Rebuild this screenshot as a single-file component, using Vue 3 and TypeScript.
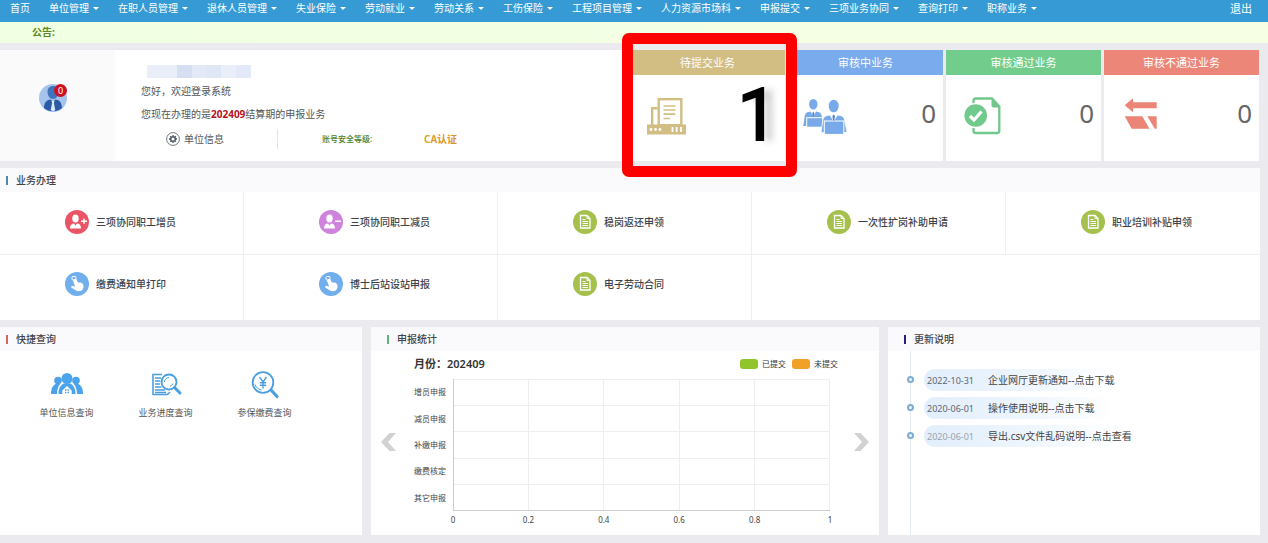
<script setup lang="ts">
interface Stat { label: string; value: string; tone: string; icon: string; marked?: boolean }
interface Service { label: string; icon: string; tone: string }

const menus: string[] = [
  '单位管理', '在职人员管理', '退休人员管理', '失业保险', '劳动就业', '劳动关系', '工伤保险',
  '工程项目管理', '人力资源市场科', '申报提交', '三项业务协同', '查询打印', '职称业务',
]

const stats: Stat[] = [
  { label: '待提交业务', value: '1', tone: 'sand', icon: 'pending', marked: true },
  { label: '审核中业务', value: '0', tone: 'blue', icon: 'review' },
  { label: '审核通过业务', value: '0', tone: 'green', icon: 'passed' },
  { label: '审核不通过业务', value: '0', tone: 'red', icon: 'failed' },
]

const services: Service[] = [
  { label: '三项协同职工增员', icon: 'plus', tone: 'rose' },
  { label: '三项协同职工减员', icon: 'minus', tone: 'violet' },
  { label: '稳岗返还申领', icon: 'doc', tone: 'lime' },
  { label: '一次性扩岗补助申请', icon: 'doc', tone: 'lime' },
  { label: '职业培训补贴申领', icon: 'doc', tone: 'lime' },
  { label: '缴费通知单打印', icon: 'hand', tone: 'sky' },
  { label: '博士后站设站申报', icon: 'hand', tone: 'sky' },
  { label: '电子劳动合同', icon: 'doc', tone: 'lime' },
]

const queries = [
  { label: '单位信息查询', icon: 'people' },
  { label: '业务进度查询', icon: 'progress' },
  { label: '参保缴费查询', icon: 'fee' },
]

const categories: string[] = ['增员申报', '减员申报', '补缴申报', '缴费核定', '其它申报']
const ticks: string[] = ['0', '0.2', '0.4', '0.6', '0.8', '1']

const updates = [
  { date: '2022-10-31', text: '企业网厅更新通知--点击下载', muted: false },
  { date: '2020-06-01', text: '操作使用说明--点击下载', muted: false },
  { date: '2020-06-01', text: '导出.csv文件乱码说明--点击查看', muted: true },
]
</script>

<template>
  <div class="page">
    <nav class="nav">
      <a class="nav-item" href="#">首页</a>
      <button v-for="m in menus" :key="m" class="nav-item" type="button">{{ m }}<i class="caret"></i></button>
      <a class="nav-item logout" href="#">退出</a>
    </nav>
    <div class="notice">公告:</div>

    <main class="main">
      <section class="top">
        <div class="welcome">
          <div class="avatar-col">
            <div class="avatar">
              <svg viewBox="0 0 28 28" width="28" height="28">
                <circle cx="14" cy="14" r="14" fill="#a5c3ec" />
                <path d="M14 2c3.600 0 5.500 2.500 5.500 6s-2.300 7-5.500 7-5.500-3.500-5.500-7 1.900-6 5.500-6z" fill="#3f74bb" />
                <path d="M5 24c0-5 2.500-8 6.500-8.500L14 18l2.500-2.500C20.500 16 23 19 23 24a14 14 0 0 1-18 0z" fill="#2c5ba6" />
                <path d="M12.500 17h3l-.6 2 1.400 7-2.300 1.500L11.700 26l1.400-7z" fill="#dbe8fa" />
              </svg>
              <span class="badge">0</span>
            </div>
          </div>
          <div class="greeting">
            <div class="masked"><i></i><i></i><i></i><i></i><i></i><i></i><i></i></div>
            <p>您好，欢迎登录系统</p>
            <p>您现在办理的是<b>202409</b>结算期的申报业务</p>
            <div class="account">
              <a class="unit" href="#">
                <svg viewBox="0 0 14 14" width="14" height="14" fill="none" stroke="#4a5560">
                  <circle cx="7" cy="7" r="6.400" stroke-width=".8" />
                  <circle cx="7" cy="7" r="2.300" stroke-width="1.500" />
                  <path d="M7 3v1M7 10v1M3 7h1M10 7h1M4.200 4.200l.7.7M9.100 9.100l.7.7M4.200 9.800l.7-.7M9.100 4.900l.7-.7" stroke-width="1.300" />
                </svg>
                单位信息
              </a>
              <div class="level"><span>账号安全等级:</span><strong>CA认证</strong></div>
            </div>
          </div>
        </div>

        <a v-for="s in stats" :key="s.label" class="stat" :class="s.tone" href="#">
          <span class="stat-head">{{ s.label }}</span>
          <span class="stat-body">
            <svg v-if="s.icon === 'pending'" viewBox="0 0 44 38" width="44" height="38">
              <path d="M12.500 11.200H7.200V28" fill="none" stroke="#d2bd83" stroke-width="2.400" />
              <rect x="13.700" y="2.200" width="22.600" height="26" fill="#fff" stroke="#d2bd83" stroke-width="2.400" />
              <path d="M18.500 9h12M18.500 13h12M18.500 17.200h12M18.500 21.500h6.500" stroke="#d2bd83" stroke-width="1.700" />
              <rect x="2" y="27.500" width="39" height="10" fill="#d2bd83" />
              <path d="M27.500 30v5M31.700 30v5M36 30v5" stroke="#fff" stroke-width="1.800" />
              <circle cx="6" cy="32.500" r="1.400" fill="#fff" /><circle cx="10.500" cy="32.500" r="1.400" fill="#fff" /><circle cx="15" cy="32.500" r="1.400" fill="#fff" />
            </svg>
            <svg v-else-if="s.icon === 'review'" viewBox="0 0 44 38" width="44" height="38">
              <g fill="#78a9e8">
                <ellipse cx="10.300" cy="7.300" rx="4.200" ry="5.200" />
                <path d="M.3 29l1.500-10.500C2.200 16 4 15 7.500 14.500L10.300 19l2.800-4.500c3.500.5 5 1.500 5.600 4L20 29z" />
                <rect x="3.700" y="20.700" width="16" height="9.500" stroke="#fff" stroke-width="1" />
                <ellipse cx="30.700" cy="9" rx="5" ry="6.300" />
                <path d="M18 35.500l1.800-12.500c.5-3 2.700-4.500 7.200-5l3.700 6 3.700-6c4.500.5 6.700 2 7.200 5L44 35.500z" stroke="#fff" stroke-width=".8" />
                <rect x="21.300" y="24" width="19.500" height="13.400" stroke="#fff" stroke-width="1" />
              </g>
              <path d="M10.300 14.500l1 1.400-.6 4h-.8l-.6-4zM30.700 17.500l1.300 1.600-.7 4.600h-1.200l-.7-4.600z" fill="#4f86d2" />
            </svg>
            <svg v-else-if="s.icon === 'passed'" viewBox="0 0 44 38" width="44" height="38">
              <path d="M12.500 8V3.500a2 2 0 0 1 2-2H31l7.300 8V34a2 2 0 0 1-2 2H14.500a2 2 0 0 1-2-2v-5" fill="#fff" stroke="#72c78c" stroke-width="2.300" />
              <path d="M30.500.5L39.500 10.500h-7a2 2 0 0 1-2-2z" fill="#72c78c" />
              <circle cx="14.700" cy="18.500" r="12.600" fill="#fff" />
              <circle cx="14.700" cy="18.500" r="11.300" fill="#72c98c" />
              <path d="M9 19l4 4 7.500-8.500" fill="none" stroke="#fff" stroke-width="3.200" />
            </svg>
            <svg v-else viewBox="0 0 44 38" width="44" height="38" fill="#ea8578">
              <path d="M5.700 8.300L14 1.300v4h23.700v6H14v4zM5.700 19.300h17.600L30.500 31.700H12.700zM28.300 19.300h9.400v12.400h-2z" />
            </svg>
            <span class="stat-value" :class="{ handwritten: s.marked }">{{ s.value }}</span>
          </span>
          <span v-if="s.marked" class="marker"></span>
        </a>
      </section>

      <section class="panel">
        <h2 class="title teal">业务办理</h2>
        <div class="services">
          <a v-for="s in services" :key="s.label" class="service" href="#">
            <svg viewBox="0 0 24 24" width="24" height="24" :class="s.tone">
              <circle cx="12" cy="12" r="12" />
              <g v-if="s.icon === 'plus' || s.icon === 'minus'" fill="#fff">
                <ellipse cx="10.500" cy="8.500" rx="3.200" ry="4" />
                <path d="M5 18.500c0-3.500 1.500-4.800 4-5l1.500 2 1.500-2c2.500.2 4 1.500 4 5z" />
                <path v-if="s.icon === 'plus'" d="M18.300 8.500h1.400v2H22v1.400h-2.300v2h-1.400v-2H16v-1.400h2.300z" />
                <path v-else d="M16 10.500h6v1.400h-6z" />
              </g>
              <g v-else-if="s.icon === 'doc'" fill="none" stroke="#fff">
                <path d="M7.500 5.500h6.500l3 3v9.500H7.500z" stroke-width="1.300" />
                <path d="M14 5.500v3h3" stroke-width="1" />
                <path d="M9.500 9.500h3M9.500 11.500h5.500M9.500 13.500h5.500M9.500 15.500h5.500" stroke-width="1" />
              </g>
              <g v-else>
                <rect x="7" y="4.500" width="4" height="3.500" rx="1" fill="none" stroke="#fff" stroke-width="1" />
                <path d="M9.400 7.200c.9-.6 1.900-.1 2.300.8l1.200 2.600c2.400-.4 4.600.2 5.300 1.900.7 1.700.3 4.200-1 5.600-1.600 1.500-5 1.600-6.500.2L6.500 15.700c-.9-.9.200-2.300 1.400-1.800l2.200.8-2-5.800c-.2-.8.600-1.300 1.300-1.700z" fill="#fff" />
              </g>
            </svg>
            {{ s.label }}
          </a>
        </div>
      </section>

      <section class="bottom">
        <div class="panel">
          <h2 class="title red">快捷查询</h2>
          <div class="queries">
            <a v-for="q in queries" :key="q.label" class="query" href="#">
              <svg v-if="q.icon === 'people'" viewBox="0 0 34 28" width="34" height="28" fill="#4aa3ec">
                <circle cx="8" cy="9.500" r="3.800" /><circle cx="26" cy="9.500" r="3.800" />
                <path d="M1 23c0-6 2-9.500 6-10.500h3.500C8 15.500 7 19 7 23zM33 23c0-6-2-9.500-6-10.500h-3.500C26 15.500 27 19 27 23z" />
                <circle cx="17" cy="7.500" r="5.500" />
                <path d="M8.500 23c0-6 2.500-10 6-10.500h5c3.500.5 6 4.500 6 10.500h-3.800v-3.500L17 15l-4.700 4.500V23z" />
                <path d="M15 18.300h1.500v1.500H15zM17.500 18.300H19v1.500h-1.500zM15 20.700h1.500v1.500H15zM17.500 20.700H19v1.500h-1.500z" />
              </svg>
              <svg v-else-if="q.icon === 'progress'" viewBox="0 0 34 28" width="34" height="28" fill="none" stroke="#4a9fe0">
                <path d="M13 3.500H4v20h14.500l2.500-2.500" stroke-width="1.600" />
                <path d="M6 7h6M6 10h5M6 13h5M6 16h6.500M6 19h10M6 21.500h11" stroke-width="1.300" />
                <circle cx="20" cy="11" r="7.500" stroke-width="1.900" fill="#fff" />
                <path d="M15.500 11a4.500 4.500 0 0 1 4.500-4.500M24 12.500a4.500 4.500 0 0 1-3 2.800" stroke-width="1" />
                <path d="M25.500 16.500l5.500 5.500" stroke-width="3" stroke-linecap="round" />
              </svg>
              <svg v-else viewBox="0 0 34 28" width="34" height="28" fill="none" stroke="#4a9fe0">
                <circle cx="15" cy="11.500" r="10.300" stroke-width="1.800" />
                <path d="M11.500 6l3.500 5 3.500-5M15 11v6.500M11.800 11.700h6.400M11.800 14.300h6.400" stroke-width="1.400" />
                <path d="M7 13.500c1 3 3.500 5 6.500 5.500" stroke-width="1" />
                <path d="M23.500 19.500l5.500 6" stroke-width="3.200" stroke-linecap="round" />
              </svg>
              <span>{{ q.label }}</span>
            </a>
          </div>
        </div>

        <div class="panel">
          <h2 class="title green">申报统计</h2>
          <div class="carousel">
            <button class="arrow" type="button" aria-label="上一页">
              <svg viewBox="0 0 15 18" width="15" height="18"><path d="M8.500 0H15L7 9l8 9H8.500L0 9z" fill="#d2d2d2" /></svg>
            </button>
            <div class="chart">
              <div class="chart-head">
                <h3>月份：202409</h3>
                <span class="legend"><i class="done"></i>已提交</span>
                <span class="legend"><i class="todo"></i>未提交</span>
              </div>
              <div class="chart-body">
                <div class="y-axis"><span v-for="c in categories" :key="c">{{ c }}</span></div>
                <div class="plot"><i v-for="n in 25" :key="n"></i></div>
              </div>
              <div class="x-axis"><span v-for="t in ticks" :key="t">{{ t }}</span></div>
            </div>
            <button class="arrow" type="button" aria-label="下一页">
              <svg viewBox="0 0 15 18" width="15" height="18"><path d="M6.500 0H0l8 9-8 9h6.500L15 9z" fill="#d2d2d2" /></svg>
            </button>
          </div>
        </div>

        <div class="panel updates-panel">
          <h2 class="title navy">更新说明</h2>
          <ul class="updates">
            <li v-for="u in updates" :key="u.text">
              <i class="dot"></i>
              <a href="#" class="update"><time :class="{ muted: u.muted }">{{ u.date }}</time>{{ u.text }}</a>
            </li>
          </ul>
        </div>
      </section>
    </main>
  </div>
</template>

<style>
body { background: #ebebef; }
</style>

<style scoped>
.page {
  font-family: "Noto Sans", "Noto Sans CJK SC", sans-serif;
  font-size: 10px;
  line-height: 16px;
  color: #555;
  overflow: hidden;
}
.page *, .page *::before { box-sizing: border-box; }
a { color: inherit; text-decoration: none; }
button { font: inherit; color: inherit; background: none; border: 0; padding: 0; cursor: pointer; }
h2, h3, p, ul { margin: 0; padding: 0; }
svg { display: block; flex: none; }

.nav {
  display: flex;
  gap: 19px;
  padding: 0 16px 5px 10px;
  background: #369bd4;
  color: #fff;
  white-space: nowrap;
}
.nav-item { display: flex; align-items: center; gap: 4px; line-height: 17px; font-weight: 400; }
.caret { border: 3px solid transparent; border-top-color: #fff; border-bottom: 0; }
.logout { margin-left: auto; font-size: 11px; }
.notice {
  padding: 2px 32px 3px;
  background: linear-gradient(90deg, #f1ffe2, #f6ffe4);
  color: #5c8a1e;
  font-weight: 700;
}

.main { display: flex; flex-direction: column; gap: 7px; margin-left: -10px; padding: 7px 8px 9px 0; }

.top { display: flex; gap: 3px; margin-right: 1px; }
.welcome { display: flex; flex: 1; min-width: 0; background: #fff; margin-right: -1px; }
.avatar-col { display: flex; width: 125px; padding: 34px 0 0 49px; background: #fafafb; }
.avatar { position: relative; width: 28px; height: 28px; }
.badge {
  position: absolute;
  top: 0;
  right: 0;
  width: 13px;
  height: 13px;
  border-radius: 50%;
  background: #cb1020;
  color: #fff;
  font-size: 9px;
  line-height: 13px;
  text-align: center;
}
.greeting { flex: 1; padding: 15px 0 0 26px; white-space: nowrap; }
.masked { display: flex; width: 104px; height: 13px; margin: 0 0 5px 6px; }
.masked i { flex: 1; background: #e9eef9; }
.masked i:nth-child(3) { background: #d6dff1; }
.masked i:nth-child(4) { background: #e3e9f6; }
.masked i:nth-child(5) { background: #dfe7f6; }
.masked i:nth-child(7) { background: #e3e9f8; }
.greeting p { margin-bottom: 7px; }
.greeting b { color: #b5121b; }
.account { display: flex; align-items: center; height: 20px; }
.unit { display: flex; align-items: center; gap: 4px; width: 137px; height: 20px; padding-left: 25px; border-right: 1px solid #e4e4e4; }
.level { display: flex; align-items: center; padding-left: 44px; font-size: 8px; font-weight: 500; color: #4c7d24; }
.level span { width: 102px; }
.level strong { color: #de9622; font-size: 10px; font-weight: 600; }

.stat { position: relative; flex: 0 0 155px; background: #fff; }
.stat-head { display: block; height: 25px; font-size: 11px; line-height: 25px; color: #fff; text-align: center; }
.sand .stat-head { background: #d2bd83; }
.blue .stat-head { background: #7aabec; }
.green .stat-head { background: #72cd8c; }
.red .stat-head { background: #ec8679; }
.stat-body { display: flex; justify-content: space-between; align-items: center; height: 86px; padding: 0 7px 4px 15px; }
.stat-value { padding-bottom: 6px; font-size: 26px; line-height: 36px; color: #666; }
.stat-value.handwritten {
  padding-bottom: 0;
  font-family: Roboto, sans-serif;
  font-size: 72px;
  font-weight: 400;
  color: #000;
  -webkit-text-stroke: 2px #000;
  stroke-linejoin: round;
  text-shadow: 9px 1px 7px rgba(0, 0, 0, 0.2);
}
.marker {
  position: absolute;
  z-index: 1;
  inset: -17px -12px -16px -8px;
  border: 11px solid #fe0000;
  border-radius: 7px;
}

.panel { background: #fff; min-width: 0; }
.title {
  display: flex;
  align-items: center;
  gap: 8px;
  height: 24px;
  padding-left: 16px;
  background: #fafafc;
  color: #3f444b;
  font-size: 10px;
  font-weight: 500;
}
.title::before { content: ""; width: 2px; height: 9px; background: #4d89a8; }
.title.red::before { background: #d9665a; }
.title.green::before { background: #5cb775; }
.title.navy::before { background: #2d1b83; }

.services { display: grid; grid-template-columns: repeat(5, 1fr); grid-template-rows: 63px 65px; }
.service {
  display: flex;
  align-items: center;
  gap: 7px;
  padding: 0 0 2px 75px;
  border-right: 1px solid #efeff1;
  border-bottom: 1px solid #efeff1;
  color: #3d434a;
  font-weight: 500;
  white-space: nowrap;
}
.service:nth-child(5n) { border-right: 0; }
.service:nth-child(n + 6) { padding-bottom: 7px; border-bottom: 0; }
.rose { fill: #ea5464; }
.violet { fill: #cf83dd; }
.lime { fill: #a6c04e; }
.sky { fill: #70aeec; }

.bottom { display: grid; grid-template-columns: 372fr 508fr 372fr; gap: 9px; min-height: 208px; }
.queries { display: flex; padding: 20px 0 0 27px; }
.query { display: flex; flex-direction: column; align-items: center; gap: 6px; width: 99px; font-size: 9px; }

.carousel { display: flex; justify-content: space-between; padding: 4px 10px 0; }
.arrow { padding-top: 2px; }
.chart { flex: 1; padding: 0 24px 0 18px; }
.chart-head { display: flex; align-items: center; gap: 6px; margin-right: -8px; height: 18px; }
.chart-head h3 { flex: 1; font-size: 11px; font-weight: 600; color: #333; }
.legend { display: flex; align-items: center; gap: 4px; font-size: 8px; color: #333; }
.legend i { width: 18px; height: 10px; border-radius: 3px; }
.done { background: #90c52c; }
.todo { background: #f2a128; }
.chart-body { display: flex; gap: 5px; height: 132px; margin-top: 6px; }
.y-axis { display: grid; grid-template-rows: repeat(5, 1fr); align-items: center; width: 34px; font-size: 8px; line-height: 12px; white-space: nowrap; color: #444; }
.plot { flex: 1; display: grid; grid-template: repeat(5, 1fr) / repeat(5, 1fr); border-left: 1px solid #ccc; border-bottom: 1px solid #ccc; }
.plot i { border-top: 1px solid #eee; border-right: 1px solid #eee; }
.x-axis { display: flex; justify-content: space-between; margin: 3px -10px 0 29px; font-size: 8px; line-height: 12px; color: #444; }
.x-axis span { width: 20px; text-align: center; }

.updates-panel { display: flex; flex-direction: column; }
.updates {
  flex: 1;
  display: flex;
  flex-direction: column;
  gap: 6px;
  margin-left: 22px;
  padding-top: 18px;
  border-left: 1px solid #e0ebf5;
  list-style: none;
}
.updates li { display: flex; align-items: center; gap: 10px; margin-left: -4px; }
.dot { width: 7px; height: 7px; border: 2px solid #7cabd3; border-radius: 50%; background: #fff; margin-bottom: 2px; }
.update {
  width: 240px;
  height: 22px;
  padding-left: 3px;
  border-radius: 11px;
  background: linear-gradient(90deg, #e2eefb, #edf5fd 40%, #fff 80%);
  line-height: 23px;
  white-space: nowrap;
  color: #444;
}
.update time { display: inline-block; width: 61px; font-size: 9px; color: #5c6672; }
.update time.muted { color: #98a3ae; }
</style>
